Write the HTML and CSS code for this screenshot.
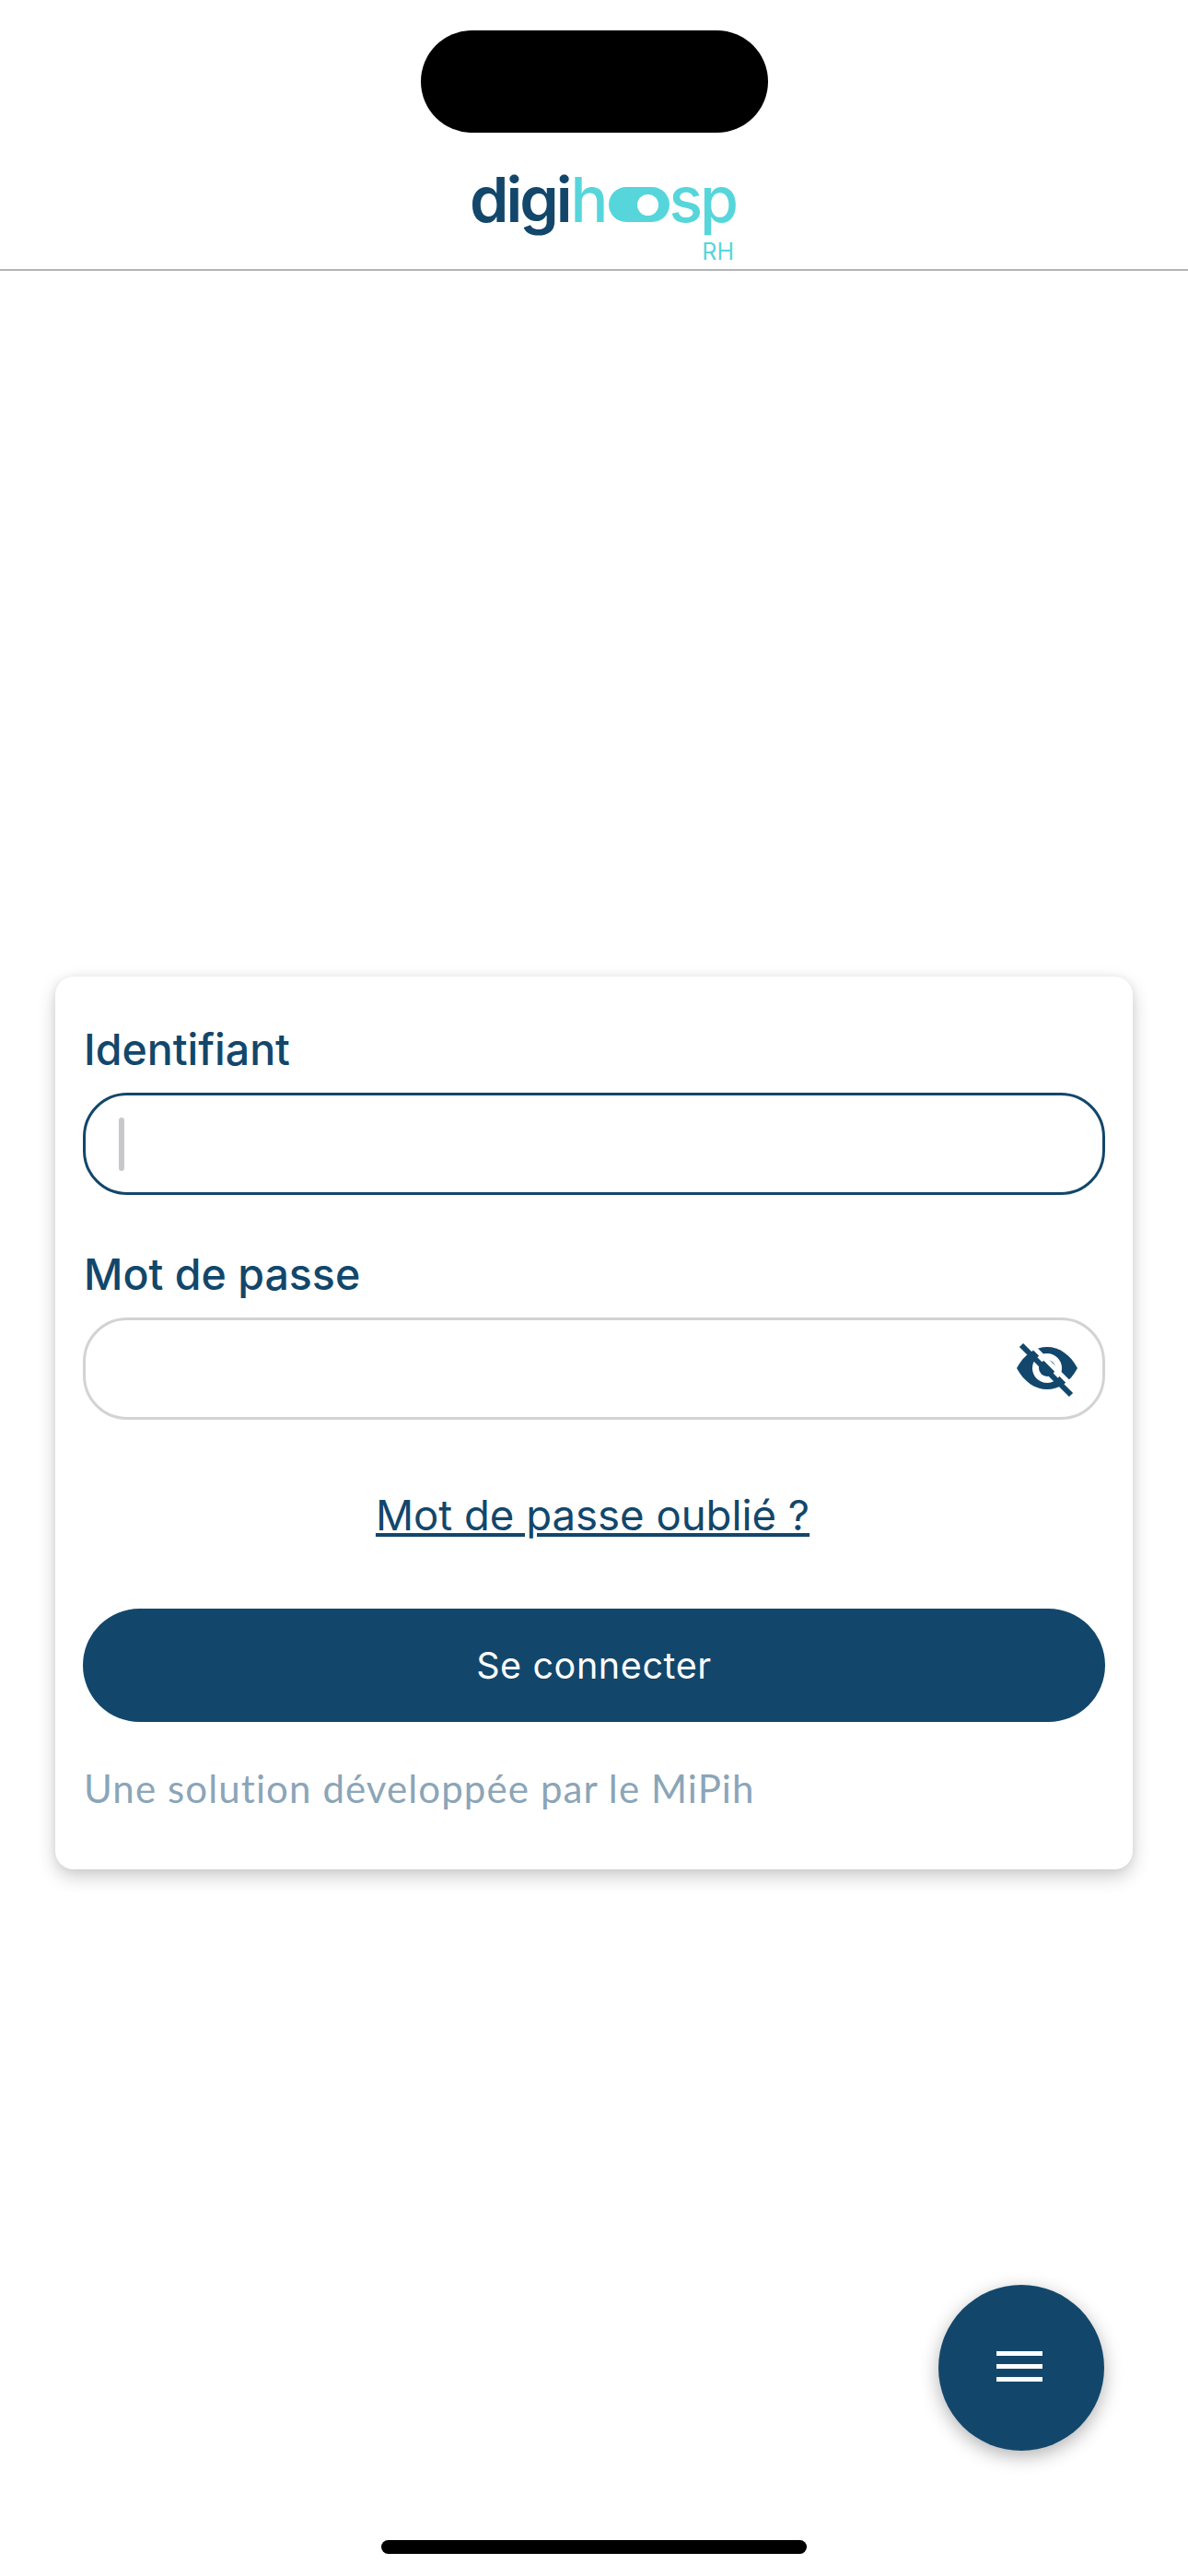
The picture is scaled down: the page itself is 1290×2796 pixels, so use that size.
FILE: index.html
```html
<!DOCTYPE html>
<html lang="fr">
<head>
  <meta charset="UTF-8">
  <title>digihosp RH - Connexion</title>
  <link rel="stylesheet" href="styles.css">
</head>
<body>

  <header class="entete">
    <div class="ilot"></div>
    <div class="logo">
      <div class="logo-ligne">
        <span class="logo-digi">digi</span>
        <span class="logo-h">h</span>
        <span class="logo-pilule"><span class="logo-trou"></span></span>
        <span class="logo-sp">sp</span>
      </div>
      <div class="logo-rh">RH</div>
    </div>
  </header>

  <main class="contenu">
    <form class="carte">
      <label class="libelle">Identifiant</label>
      <div class="champ champ-actif"><span class="curseur"></span></div>

      <label class="libelle libelle-2">Mot de passe</label>
      <div class="champ">
        <svg class="oeil" viewBox="0 0 66 57" width="66" height="57">
          <path fill="#12476b" d="M0 26C8 11 20 3 33 3s25 8 33 23c-8 15-20 23-33 23S8 41 0 26z"/>
          <circle cx="33" cy="26" r="16" fill="#fff"/>
          <circle cx="33" cy="26" r="9" fill="#12476b"/>
          <path stroke="#fff" stroke-width="5" d="M14 -1L64 49"/>
          <path stroke="#12476b" stroke-width="6" d="M5 1L59 55"/>
        </svg>
      </div>

      <a class="oubli" href="#">Mot de passe oublié ?</a>

      <button class="connexion" type="button">Se connecter</button>

      <p class="mention">Une solution développée par le MiPih</p>
    </form>
  </main>

  <button class="menu" type="button" aria-label="Menu">
    <span></span>
    <span></span>
    <span></span>
  </button>

  <div class="barre-accueil"></div>

</body>
</html>
```

FILE: styles.css
```css
body {
  margin: 0;
  height: 2796px;
  overflow: hidden;
  font-family: Inter, "Liberation Sans", sans-serif;
  background-color: #fff;
  color: #12476b;
  position: relative;
}

.entete {
  height: 294px;
  padding-top: 33px;
  box-sizing: border-box;
  border-bottom: 2px solid #b4b4b4;
  display: flex;
  flex-direction: column;
  align-items: center;
}

.ilot {
  width: 377px;
  height: 111px;
  border-radius: 56px;
  background-color: #000;
}

.logo {
  margin-top: 34px;
  width: 288px;
  padding-left: 26px;
}

.logo-ligne {
  display: flex;
  align-items: center;
  height: 76px;
  font-size: 68px;
  line-height: 76px;
  font-weight: 500;
  color: #56d6da;
}

.logo-digi {
  color: #12476b;
  font-weight: 600;
  letter-spacing: -3px;
  margin-left: -4px;
}

.logo-h {
  margin-left: 1px;
}

.logo-pilule {
  width: 66px;
  height: 38px;
  margin-left: 1px;
  margin-top: 12px;
  border-radius: 19px;
  background-color: #56d6da;
  display: flex;
  align-items: center;
  justify-content: flex-end;
  padding-right: 12px;
  box-sizing: border-box;
}

.logo-trou {
  width: 23px;
  height: 23px;
  border-radius: 50%;
  background-color: #fff;
}

.logo-sp {
  margin-left: -1px;
  letter-spacing: -3px;
}

.logo-rh {
  margin-top: 6px;
  padding-right: 5px;
  text-align: right;
  font-size: 25px;
  line-height: 26px;
  color: #56d6da;
}

.contenu {
  padding: 766px 60px 0;
}

.carte {
  height: 969px;
  box-sizing: border-box;
  padding: 52px 30px 0;
  background-color: #fff;
  border-radius: 20px;
  box-shadow: 0 8px 20px rgba(0, 0, 0, 0.2), 0 0 10px rgba(0, 0, 0, 0.06);
  display: flex;
  flex-direction: column;
}

.libelle {
  display: block;
  font-size: 46.5px;
  line-height: 54px;
  font-weight: 500;
  padding-left: 1px;
}

.libelle-2 {
  margin-top: 59px;
}

.champ {
  margin-top: 20px;
  height: 111px;
  box-sizing: border-box;
  border: 3px solid #d3d3d3;
  border-radius: 48px;
  display: flex;
  align-items: center;
  justify-content: flex-end;
  padding: 0 27px 0 36px;
}

.champ-actif {
  border-color: #12476b;
  justify-content: flex-start;
}

.curseur {
  width: 6px;
  height: 58px;
  border-radius: 3px;
  background-color: #c8c8cc;
}

.oeil {
  display: block;
  overflow: visible;
  margin-top: 4px;
}

.oubli {
  margin-top: 77px;
  margin-right: 3px;
  align-self: center;
  font-size: 45.5px;
  line-height: 54px;
  color: #12476b;
}

.connexion {
  margin-top: 74px;
  height: 123px;
  flex-shrink: 0;
  border: none;
  border-radius: 62px;
  background-color: #12476b;
  color: #fff;
  font-family: Inter, sans-serif;
  font-size: 39.5px;
  letter-spacing: 0.6px;
}

.mention {
  margin: 48px 0 0;
  padding-left: 1px;
  font-family: Lato, sans-serif;
  font-size: 42px;
  line-height: 48px;
  letter-spacing: 1.1px;
  color: #8ba5b8;
}

/* bouton flottant et barre iOS, par-dessus la page */
.menu {
  position: absolute;
  left: 1019px;
  top: 2480px;
  width: 180px;
  height: 180px;
  border: none;
  border-radius: 50%;
  background-color: #12476b;
  box-shadow: 0 6px 20px rgba(0, 0, 0, 0.3);
  display: flex;
  flex-direction: column;
  align-items: center;
  justify-content: center;
  gap: 9px;
  padding: 0 4px 4px 0;
}

.menu span {
  width: 50px;
  height: 5px;
  background-color: #fff;
}

.barre-accueil {
  position: absolute;
  left: 414px;
  top: 2757px;
  width: 462px;
  height: 15px;
  border-radius: 8px;
  background-color: #000;
}
```
